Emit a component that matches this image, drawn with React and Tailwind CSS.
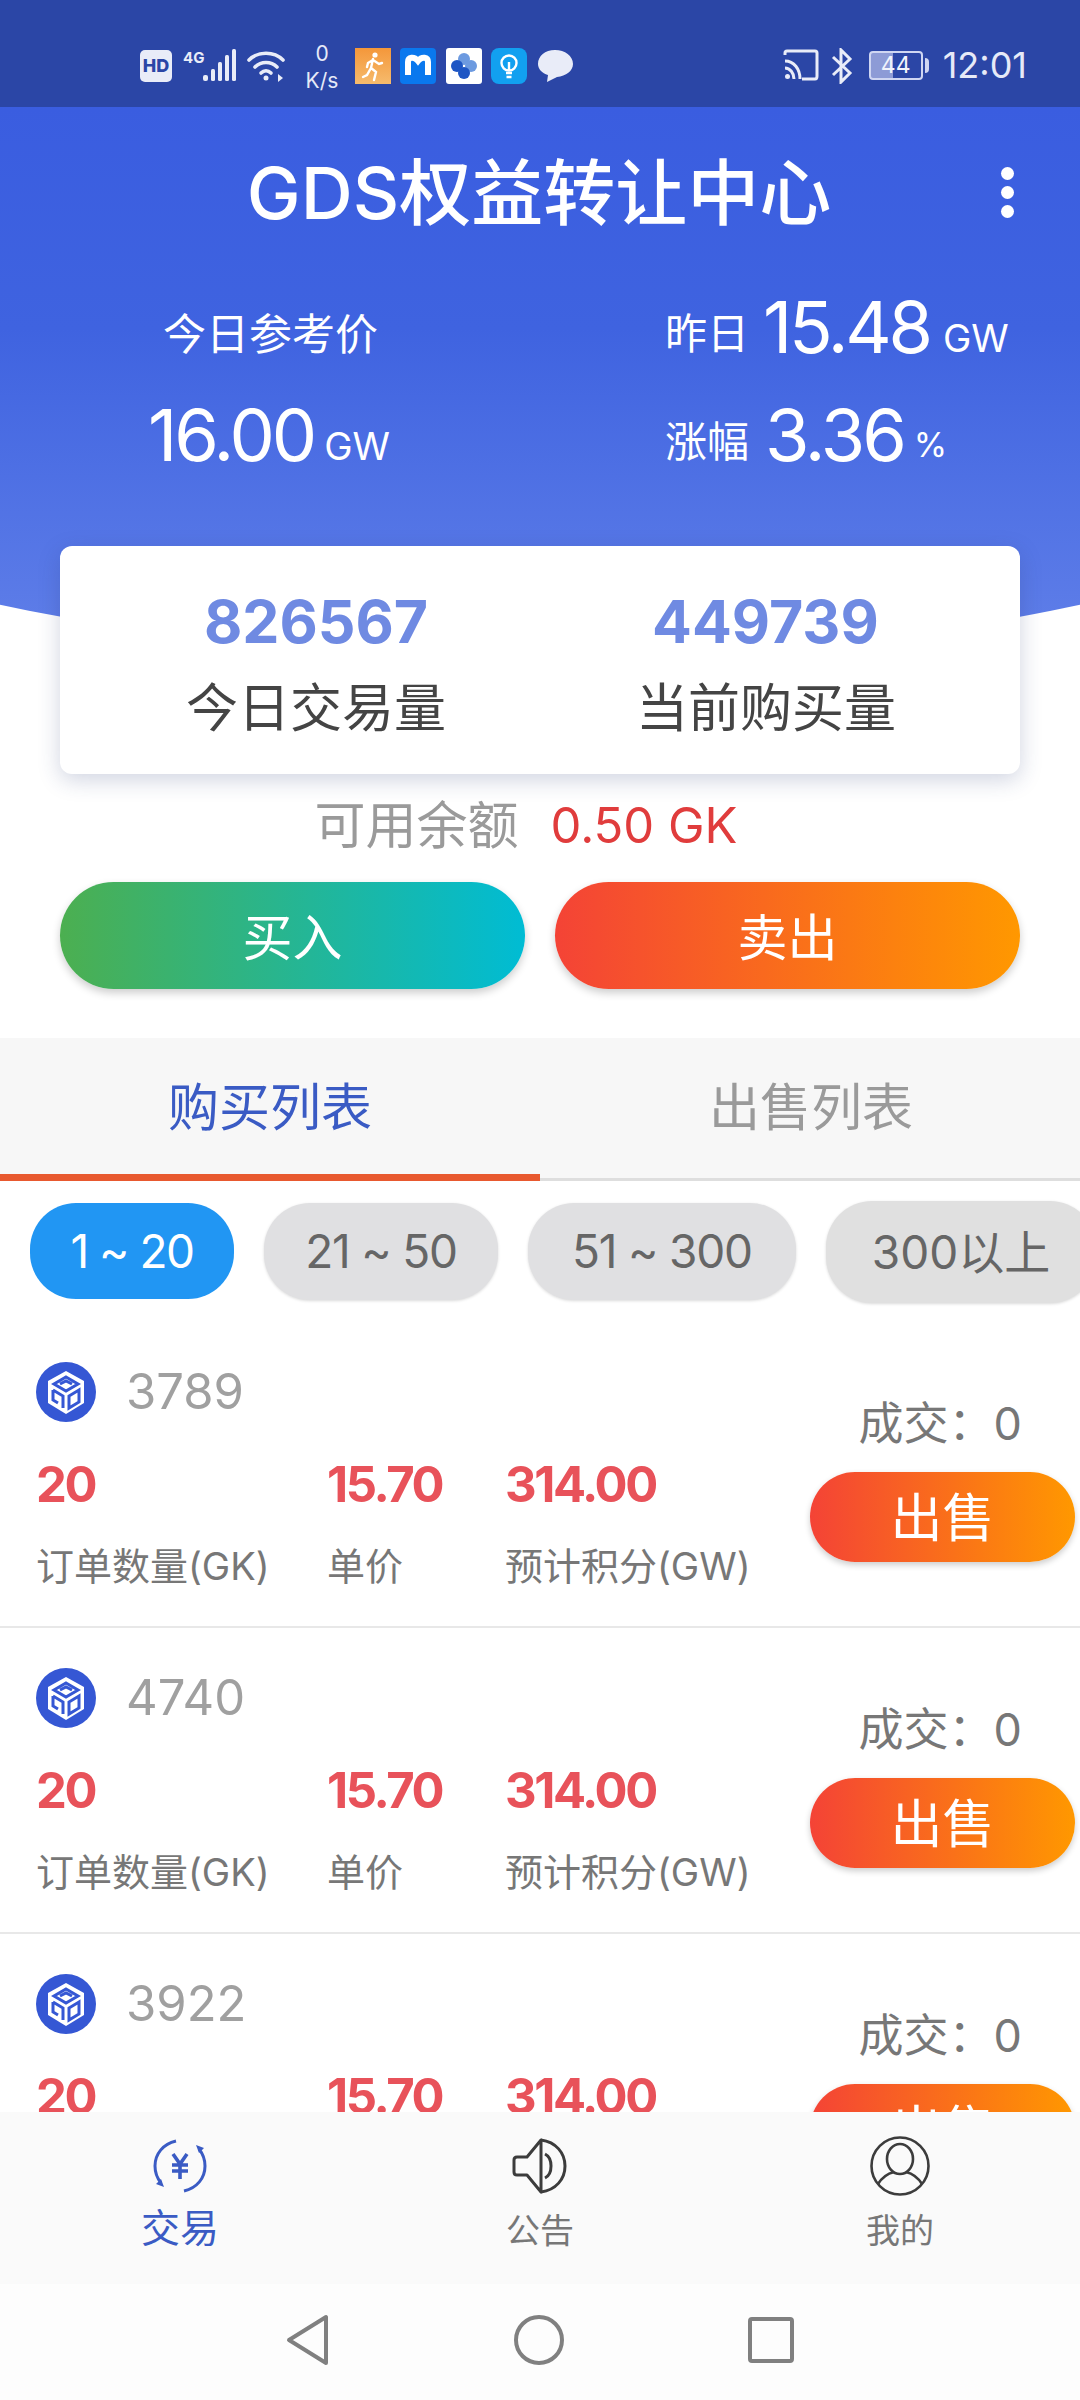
import React from 'react';

const orders = [{ id: '3789' }, { id: '4740' }, { id: '3922' }];

function StatusBar() {
  return (
    <div className="h-[107px] shrink-0 bg-[#2b46a6] flex items-start text-[#e6eaf8]">
      {/* Left cluster */}
      <div className="ml-[140px] mt-[48px] flex items-start">
        <svg width="33" height="36" viewBox="0 0 33 36">
          <rect x="0" y="2" width="32" height="32" rx="5" fill="#e9ecf8" />
          <text x="16" y="24" textAnchor="middle" fontSize="18" fontWeight="800" fill="#2b46a6" fontFamily="Inter">HD</text>
        </svg>
        <svg className="ml-[10px]" width="54" height="36" viewBox="0 0 54 36">
          <text x="0" y="15" fontSize="15" fontWeight="700" fill="#e9ecf8" fontFamily="Inter">4G</text>
          <rect x="20" y="27" width="5" height="6" rx="2" fill="#e9ecf8" />
          <rect x="28" y="21" width="4" height="12" rx="1.5" fill="#e9ecf8" />
          <rect x="35" y="14" width="4" height="19" rx="1.5" fill="#e9ecf8" />
          <rect x="42" y="7" width="4" height="26" rx="1.5" fill="#e9ecf8" />
          <rect x="49" y="1" width="4" height="32" rx="1.5" fill="#e9ecf8" />
        </svg>
        <svg className="ml-[10px]" width="40" height="36" viewBox="0 0 40 36" fill="none" stroke="#e9ecf8" strokeWidth="3.6" strokeLinecap="round">
          <path d="M2 12 C11 3 27 3 36 12" />
          <path d="M8 19 C14 13 24 13 30 19" />
          <path d="M14 25 C17 22 21 22 24 25" />
          <circle cx="19" cy="30" r="2.5" fill="#e9ecf8" stroke="none" />
          <path d="M31 26 L36 30 L31 34 Z" fill="#e9ecf8" stroke="none" />
        </svg>
        <div className="ml-[16px] w-[38px] -mt-[8px] flex flex-col items-center text-[21px] leading-[27px] font-normal">
          <span>0</span>
          <span>K/s</span>
        </div>
        <svg className="ml-[14px]" width="36" height="36" viewBox="0 0 36 36">
          <defs>
            <linearGradient id="runner" x1="0" y1="0" x2="0" y2="1">
              <stop offset="0" stopColor="#f4973a" />
              <stop offset="1" stopColor="#f6bb6d" />
            </linearGradient>
          </defs>
          <rect width="36" height="36" fill="url(#runner)" />
          <circle cx="20" cy="7" r="2.6" fill="#fff" />
          <path d="M18 11 L16 20 L21 24 L19 32 M16 20 L12 27 L8 29 M18 12 L24 16 L27 15 M18 12 L13 15 L12 19" stroke="#fff" strokeWidth="2.4" fill="none" strokeLinecap="round" />
        </svg>
        <svg className="ml-[9px]" width="36" height="36" viewBox="0 0 36 36">
          <rect width="36" height="36" rx="4" fill="#0a78ee" />
          <path d="M8 27 V14 C8 9 14 8 18 13 C22 8 28 9 28 14 V27" fill="none" stroke="#fff" strokeWidth="6" />
        </svg>
        <svg className="ml-[10px]" width="36" height="36" viewBox="0 0 36 36">
          <rect width="36" height="36" rx="3" fill="#fff" />
          <circle cx="18" cy="11" r="6" fill="#6c9ae0" />
          <circle cx="11" cy="18" r="6" fill="#1e56c4" />
          <circle cx="25" cy="18" r="6" fill="#6c9ae0" />
          <circle cx="18" cy="25" r="6" fill="#1e56c4" />
        </svg>
        <svg className="ml-[9px]" width="36" height="36" viewBox="0 0 36 36" fill="none">
          <rect width="36" height="36" rx="8" fill="#12a0f0" />
          <circle cx="18" cy="15" r="7.5" stroke="#fff" strokeWidth="2.4" />
          <path d="M15 25 H21 M15.5 29 H20.5 M18 14 V22" stroke="#fff" strokeWidth="2.4" />
        </svg>
        <svg className="ml-[10px]" width="36" height="36" viewBox="0 0 36 36">
          <path d="M18 2 C28 2 36 8 36 16 C36 23 29 28 20 29 L10 34 L11 27 C5 25 1 21 1 16 C1 8 8 2 18 2 Z" fill="#e9ecf8" />
        </svg>
      </div>

      {/* Right cluster */}
      <div className="ml-auto mr-[53px] mt-[48px] flex items-start">
        <svg width="36" height="36" viewBox="0 0 36 36" fill="none" stroke="#e9ecf8" strokeWidth="3">
          <path d="M2 7 V5 Q2 3 4 3 H32 Q34 3 34 5 V28 Q34 31 32 31 H19" />
          <path d="M2 13 C11 13 17 21 17 31 M2 20 C7 20 11 25 11 31" />
          <circle cx="4.5" cy="28.5" r="2.5" fill="#e9ecf8" stroke="none" />
        </svg>
        <svg className="ml-[12px]" width="22" height="36" viewBox="0 0 22 36" fill="none" stroke="#e9ecf8" strokeWidth="3">
          <path d="M2 9 L19 25 L10 34 V2 L19 11 L2 27" />
        </svg>
        <div className="ml-[16px] mt-[3px] w-[54px] h-[29px] rounded-[4px] border-2 border-[#cfd6f2] flex items-center justify-center bg-[linear-gradient(90deg,#8d9bd6_44%,transparent_44%)] text-[23px] leading-none text-[#f1f3fc]">
          44
        </div>
        <div className="ml-[2px] mt-[10px] w-[4px] h-[15px] rounded-r bg-[#cfd6f2]" />
        <span className="ml-[14px] text-[36px] leading-[37px] -mt-[1px]">12:01</span>
      </div>
    </div>
  );
}

function Header() {
  return (
    <div className="h-[554px] shrink-0 bg-[linear-gradient(180deg,#3a5de0_0%,#3f63e0_40%,#6180e9_100%)] [clip-path:circle(2620px_at_50%_-2066px)] text-white">
      <div className="relative h-[110px] pt-[48px] text-center text-[72px] leading-[76px] font-medium pr-[2px]">
        GDS权益转让中心
        <div className="absolute right-[66px] top-[60px] flex flex-col gap-[6px]">
          <span className="w-[13px] h-[13px] rounded-full bg-white" />
          <span className="w-[13px] h-[13px] rounded-full bg-white" />
          <span className="w-[13px] h-[13px] rounded-full bg-white" />
        </div>
      </div>
      <div className="mt-[74px] grid grid-cols-[665px_1fr] grid-rows-[72px_72px] gap-y-[36px]">
        <div className="pl-[163px] pt-[14px] flex items-center text-[43px]">今日参考价</div>
        <div className="flex items-end">
          <span className="text-[42px] leading-[72px] -mb-[7px]">昨日</span>
          <span className="ml-[14px] text-[72px] leading-[72px] tracking-[-3.2px]">15.48</span>
          <span className="ml-[13px] text-[38px] leading-[60px] -mb-[5px]">GW</span>
        </div>
        <div className="pl-[148px] flex items-end">
          <span className="text-[72px] leading-[72px] tracking-[-3px]">16.00</span>
          <span className="ml-[10px] text-[38px] leading-[60px] -mb-[5px]">GW</span>
        </div>
        <div className="flex items-end">
          <span className="text-[42px] leading-[72px] -mb-[7px]">涨幅</span>
          <span className="ml-[16px] text-[72px] leading-[72px] tracking-[-3px]">3.36</span>
          <span className="ml-[10px] text-[34px] leading-[56px] -mb-[2px]">%</span>
        </div>
      </div>
    </div>
  );
}

function SummaryCard() {
  return (
    <div className="relative mx-[60px] -mt-[115px] h-[228px] rounded-[12px] bg-white shadow-[0_6px_22px_rgba(40,60,120,0.22)] grid grid-cols-[514px_1fr] pt-[42px]">
      <div className="flex flex-col items-center pr-[2px]">
        <span className="text-[59px] leading-[68px] font-bold text-[#6f8ae2]">826567</span>
        <span className="mt-[23px] text-[52px] leading-[60px] text-[#444]">今日交易量</span>
      </div>
      <div className="flex flex-col items-start pl-[62px]">
        <span className="ml-[16px] text-[59px] leading-[68px] font-bold text-[#6f8ae2]">449739</span>
        <span className="mt-[23px] text-[52px] leading-[60px] text-[#444]">当前购买量</span>
      </div>
    </div>
  );
}

function TradeButtons() {
  return (
    <div className="mt-[24px] mx-[60px] flex gap-[30px]">
      <div className="flex-1 h-[107px] pt-[6px] rounded-full bg-[linear-gradient(90deg,#4caf50,#00bcd4)] shadow-[0_4px_8px_rgba(0,0,0,0.2)] flex items-center justify-center text-[50px] text-white">
        买入
      </div>
      <div className="flex-1 h-[107px] pt-[6px] rounded-full bg-[linear-gradient(90deg,#f44336,#ff9800)] shadow-[0_4px_8px_rgba(0,0,0,0.2)] flex items-center justify-center text-[50px] text-white">
        卖出
      </div>
    </div>
  );
}

function Tabs() {
  return (
    <div className="mt-[49px] h-[143px] bg-[#f7f7f7] grid grid-cols-2 text-[51px]">
      <div className="border-b-[7px] border-[#e8592f] flex items-center justify-center text-[#3a5bc4] pt-[4px]">购买列表</div>
      <div className="border-b-[3px] border-[#dedede] flex items-center justify-center text-[#9a9a9a] pl-[2px]">出售列表</div>
    </div>
  );
}

function RangeChips() {
  return (
    <div className="h-[141px] pt-[22px] pl-[30px] flex gap-[30px] overflow-hidden text-[46px] text-[#666]">
      <div className="w-[204px] h-[96px] shrink-0 rounded-[46px] bg-[#2196f3] text-white flex items-center justify-center tracking-[-1.5px]">1 ~ 20</div>
      <div className="w-[234px] h-[97px] shrink-0 rounded-[46px] bg-[#e0e0e2] shadow-[0_1px_3px_rgba(0,0,0,0.15)] flex items-center justify-center tracking-[-1.2px]">21 ~ 50</div>
      <div className="w-[268px] h-[97px] shrink-0 rounded-[46px] bg-[#e0e0e2] shadow-[0_1px_3px_rgba(0,0,0,0.15)] flex items-center justify-center tracking-[-1.2px]">51 ~ 300</div>
      <div className="w-[270px] h-[102px] -mt-[2px] shrink-0 rounded-[46px] bg-[#e0e0e0] shadow-[0_1px_3px_rgba(0,0,0,0.15)] flex items-center justify-center">300以上</div>
    </div>
  );
}

function CubeLogo() {
  return (
    <svg width="60" height="60" viewBox="0 0 60 60">
      <circle cx="30" cy="30" r="30" fill="#3557d4" />
      <path d="M30 9 L48 19 V41 L30 52 L12 41 V19 Z" fill="#fff" />
      <path d="M30 15 L42 22 L30 29 L18 22 Z M24 22 L30 19 L36 22" fill="none" stroke="#3557d4" strokeWidth="3" />
      <path d="M17 28 L27 34 V46 M17 28 V38 L22 41" fill="none" stroke="#3557d4" strokeWidth="3" />
      <path d="M43 28 L33 34 V46 L43 40 Z" fill="none" stroke="#3557d4" strokeWidth="3" />
    </svg>
  );
}

function OrderRow({ id }) {
  return (
    <div className="h-[306px] shrink-0 border-b-[2px] border-[#e8e8e8] flex pl-[36px]">
      <div className="w-[774px] pt-[40px]">
        <div className="flex items-center h-[60px]">
          <CubeLogo />
          <span className="ml-[30px] text-[49px] leading-[60px] text-[#a0a0a0]">{id}</span>
        </div>
        <div className="mt-[33px] grid grid-cols-[291px_178px_1fr] text-[49px] leading-[60px] font-bold text-[#e8525a] tracking-[-2.4px]">
          <span>20</span>
          <span>15.70</span>
          <span>314.00</span>
        </div>
        <div className="mt-[21px] grid grid-cols-[291px_178px_1fr] text-[38px] leading-[60px] text-[#777]">
          <span>订单数量(GK)</span>
          <span>单价</span>
          <span>预计积分(GW)</span>
        </div>
      </div>
      <div className="pt-[72px] flex-1">
        <div className="text-[45px] leading-[60px] text-[#777] text-right pr-[58px]">成交：0</div>
        <div className="mt-[18px] w-[265px] h-[90px] pt-[4px] rounded-full bg-[linear-gradient(90deg,#f44336,#ff9800)] shadow-[0_3px_6px_rgba(0,0,0,0.2)] flex items-center justify-center text-[52px] text-white">
          出售
        </div>
      </div>
    </div>
  );
}

function BottomTabs() {
  return (
    <div className="h-[288px] shrink-0 bg-[#fdfdfd]">
      <div className="h-[172px] bg-[#fafafa] grid grid-cols-3">
        <div className="flex flex-col items-center pt-[26px] text-[#3a5bc4]">
          <svg width="56" height="56" viewBox="0 0 56 56" fill="none" stroke="#3a5bc4" strokeWidth="3">
            <path d="M24 3 C11 6 3 16 3 28 C3 34 5 40 9 45" />
            <path d="M32 53 C45 50 53 40 53 28 C53 22 51 16 47 11" />
            <path d="M4 46 L12 49 L9 41 Z M52 10 L44 7 L47 15 Z" fill="#3a5bc4" stroke="none" />
            <path d="M21 16 L28 26 L35 16 M20 27 H36 M20 33 H36 M28 26 V41" strokeWidth="3.6" />
          </svg>
          <span className="mt-[9px] text-[39px] leading-[50px]">交易</span>
        </div>
        <div className="flex flex-col items-center pt-[26px] text-[#777]">
          <svg width="56" height="56" viewBox="0 0 56 56" fill="none" stroke="#3c3c3c" strokeWidth="3" strokeLinejoin="round">
            <path d="M5 19 H15 L29 2 V54 L15 37 H5 Q2 37 2 34 V22 Q2 19 5 19 Z" />
            <path d="M29 2 C44 4 53 15 53 28 C53 41 44 52 29 54" />
            <path d="M33 16 C41 20 41 36 33 40" />
          </svg>
          <span className="mt-[15px] text-[34px] leading-[44px]">公告</span>
        </div>
        <div className="flex flex-col items-center pt-[24px] text-[#777]">
          <svg width="60" height="60" viewBox="0 0 60 60" fill="none" stroke="#3c3c3c" strokeWidth="2.6">
            <circle cx="30" cy="30" r="28.5" />
            <ellipse cx="30" cy="23" rx="13" ry="15" />
            <path d="M8 48 C13 40 20 37 24 36 M52 48 C47 40 40 37 36 36" />
          </svg>
          <span className="mt-[13px] text-[34px] leading-[44px]">我的</span>
        </div>
      </div>
      <div className="flex justify-center items-center gap-[184px] h-[111px]">
        <svg width="44" height="52" viewBox="0 0 44 52" fill="none" stroke="#808080" strokeWidth="4" strokeLinejoin="round">
          <path d="M40 3 V49 L3 26 Z" />
        </svg>
        <svg width="50" height="50" viewBox="0 0 50 50" fill="none" stroke="#808080" strokeWidth="4">
          <circle cx="25" cy="25" r="23" />
        </svg>
        <svg width="46" height="46" viewBox="0 0 46 46" fill="none" stroke="#808080" strokeWidth="4">
          <rect x="2" y="2" width="42" height="42" rx="2" />
        </svg>
      </div>
    </div>
  );
}

export default function App() {
  return (
    <div className="w-[1080px] h-[2400px] flex flex-col overflow-hidden bg-white font-['Inter','Noto_Sans_CJK_SC',sans-serif]">
      <StatusBar />
      <div className="flex-1 min-h-0 overflow-hidden">
        <Header />
        <SummaryCard />
        <div className="mt-[20px] pr-[28px] flex justify-center items-center h-[64px] text-[51px] leading-[64px]">
          <span className="text-[#9a9a9a]">可用余额</span>
          <span className="ml-[32px] text-[#e03c3c] text-[49px]">0.50 GK</span>
        </div>
        <TradeButtons />
        <Tabs />
        <RangeChips />
        {orders.map((o) => (
          <OrderRow key={o.id} id={o.id} />
        ))}
      </div>
      <BottomTabs />
    </div>
  );
}
